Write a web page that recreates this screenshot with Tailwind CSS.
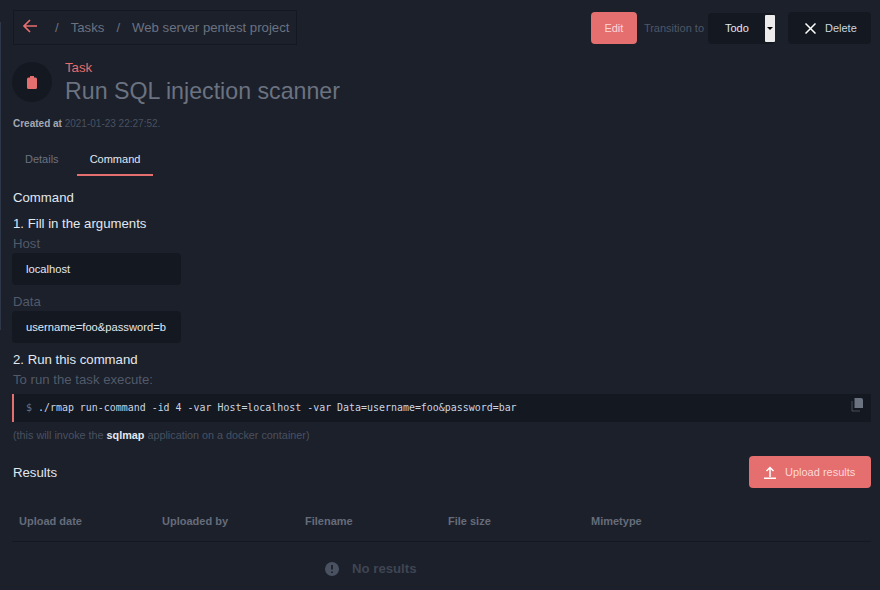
<!DOCTYPE html>
<html lang="en">
  <head>
    <meta charset="UTF-8" />
    <title>Run SQL injection scanner</title>
    <script src="https://cdn.jsdelivr.net/npm/@tailwindcss/browser@4"></script>
  </head>
  <body class="bg-[#1b202b] h-[590px] overflow-hidden font-['Liberation_Sans',sans-serif] text-[#e2e8f0]">
    <div class="absolute left-0 top-[22px] h-[308px] w-px bg-[#2d3748]"></div>
    <div class="px-[13px] pt-[11px]">
      <!-- top bar -->
      <div class="flex items-start justify-between h-[34px]">
        <div class="flex items-center h-[35px] -mt-px w-[284px] border border-[#141821] pl-2 text-[13.2px] text-[#6b7280] whitespace-nowrap">
          <svg class="shrink-0 w-[16px] h-[16px] text-[#e56e6e] mt-[-4px]" viewBox="0 0 16 16" fill="none" stroke="currentColor" stroke-width="1.700">
            <path d="M15 8H2M8 2 2 8l6 6" />
          </svg>
          <span class="ml-[17px]">/</span>
          <span class="ml-[12px]">Tasks</span>
          <span class="ml-[12px]">/</span>
          <span class="ml-[12px]">Web server pentest project</span>
        </div>
        <div class="flex items-center h-[32px] mt-px mr-[-4px] text-[11px]">
          <button class="w-[46px] h-[32px] rounded bg-[#e56e6e] text-[#fed7d7]">Edit</button>
          <span class="ml-[7px] text-[#4f5766]">Transition to</span>
          <div class="ml-[4px] w-[67px] h-[31px] rounded bg-[#141821] flex items-center relative">
            <span class="ml-[17px] text-[#e2e8f0]">Todo</span>
            <span class="absolute right-0 top-[2px] h-[27px] w-[10px] bg-[#ececec] flex items-center justify-center rounded-[1px]">
              <span class="border-x-[3px] border-t-[3px] border-x-transparent border-t-black"></span>
            </span>
          </div>
          <button class="ml-[13px] w-[83px] h-[32px] rounded bg-[#141821] flex items-center text-[#cbd5e0]">
            <svg class="ml-[17px] w-[11px] h-[11px] text-white" viewBox="0 0 11 11" fill="none" stroke="currentColor" stroke-width="1.500">
              <path d="M.5.5l10 10M10.500.5l-10 10" />
            </svg>
            <span class="ml-[9px]">Delete</span>
          </button>
        </div>
      </div>

      <!-- title -->
      <div class="flex items-center h-10 mt-[17px]">
        <div class="w-10 h-10 -ml-px rounded-full bg-[#141821] flex items-center justify-center">
          <svg class="w-[10px] h-[13px] text-[#e56e6e]" viewBox="0 0 10 13" fill="currentColor">
            <path d="M3 .2C3 0 7 0 7 .2v1.300h1.500A1.500 1.500 0 0 1 10 3v8.500A1.500 1.500 0 0 1 8.500 13h-7A1.500 1.500 0 0 1 0 11.500V3a1.500 1.500 0 0 1 1.500-1.500H3z" />
          </svg>
        </div>
        <div class="ml-[13px]">
          <div class="text-[13.2px] leading-4 text-[#e56e6e]">Task</div>
          <h1 class="text-[23.2px] leading-7 mt-[1px] text-[#6b7280]">Run SQL injection scanner</h1>
        </div>
      </div>

      <p class="mt-[16px] text-[10px] leading-3 text-[#4a5160]"><span class="font-bold text-[#a3a9b5]">Created at</span> 2021-01-23 22:27:52.</p>

      <!-- tabs -->
      <div class="flex mt-[12px] text-[11px] h-[34px] items-stretch">
        <span class="flex items-center w-[64px] pl-3 pt-px text-[#6b7280]">Details</span>
        <span class="flex items-center justify-center w-[76px] pt-[2px] border-b-2 border-[#e56e6e] text-[#e2e8f0]">Command</span>
      </div>

      <h2 class="text-[13.2px] leading-5 mt-[12px]">Command</h2>
      <h3 class="text-[13.2px] leading-5 mt-[6px]">1. Fill in the arguments</h3>
      <label class="block text-[13.2px] leading-5 text-[#525a69]">Host</label>
      <div class="w-[169px] -ml-px h-[32px] -mt-px rounded bg-[#141821] flex items-center px-[14px] text-[11.200px] overflow-hidden whitespace-nowrap">localhost</div>
      <label class="block text-[13.2px] leading-5 text-[#525a69] mt-[7px]">Data</label>
      <div class="w-[169px] -ml-px h-[32px] -mt-px rounded bg-[#141821] flex items-center px-[14px] text-[11.200px] overflow-hidden whitespace-nowrap">username=foo&amp;password=b</div>
      <h3 class="text-[13.2px] leading-5 mt-[7px]">2. Run this command</h3>
      <p class="text-[13.2px] leading-5 text-[#525a69]">To run the task execute:</p>

      <!-- command -->
      <div class="relative mt-[4px] -ml-px h-[28px] w-[859px] bg-[#141821] border-l-2 border-[#e56e6e] flex items-center pl-[12px] text-[#cbd5e0]">
        <code class="whitespace-pre font-['DejaVu_Sans_Mono',monospace] text-[9.950px]"><span class="text-[#6b7280]">$ </span>./rmap run-command -id 4 -var Host=localhost -var Data=username=foo&amp;password=bar</code>
        <svg class="absolute right-[8px] top-[4px] w-3 h-[14px] text-[#6b7280]" viewBox="0 0 12 14" fill="currentColor">
          <path d="M3.500 0H10a2 2 0 0 1 2 2v8H3.500z" />
          <path d="M1 3v10h8" fill="none" stroke="currentColor" stroke-opacity=".6" />
        </svg>
      </div>
      <p class="mt-[7px] text-[10.800px] leading-3 text-[#4a5160]">(this will invoke the <b class="text-[#e2e8f0]">sqlmap</b> application on a docker container)</p>

      <!-- results -->
      <div class="flex items-center justify-between mt-[15px] h-[32px] w-[858px]">
        <h2 class="text-[13.2px] pt-px">Results</h2>
        <button class="w-[122px] h-[32px] rounded bg-[#e56e6e] text-[#fed7d7] text-[11px] flex items-center">
          <svg class="ml-[15px] w-3 h-[13px] text-white" viewBox="0 0 12 13" fill="none" stroke="currentColor" stroke-width="1.500">
            <path d="M6 11V2M2.500 5 6 1.500 9.500 5M0 12.200h12" />
          </svg>
          <span class="ml-[9px]">Upload results</span>
        </button>
      </div>

      <div class="mt-[10px] -ml-px w-[859px] border-b border-[#141821] grid grid-cols-[143px_143px_143px_143px_1fr] h-[44px] items-center pt-[3px] pl-[7px] text-[11px] font-bold text-[#666c7a]">
        <span>Upload date</span>
        <span>Uploaded by</span>
        <span>Filename</span>
        <span>File size</span>
        <span>Mimetype</span>
      </div>
      <div class="flex items-center ml-[312px] mt-[17px] text-[13.2px] font-bold text-[#3f4552]">
        <svg class="w-[14px] h-[14px] text-[#4a5160]" viewBox="0 0 14 14">
          <circle cx="7" cy="7" r="7" fill="currentColor" />
          <path d="M7 3v4.500M7 9.500v1.500" stroke="#1b202b" stroke-width="1.800" />
        </svg>
        <span class="ml-[13px]">No results</span>
      </div>
    </div>
  </body>
</html>
